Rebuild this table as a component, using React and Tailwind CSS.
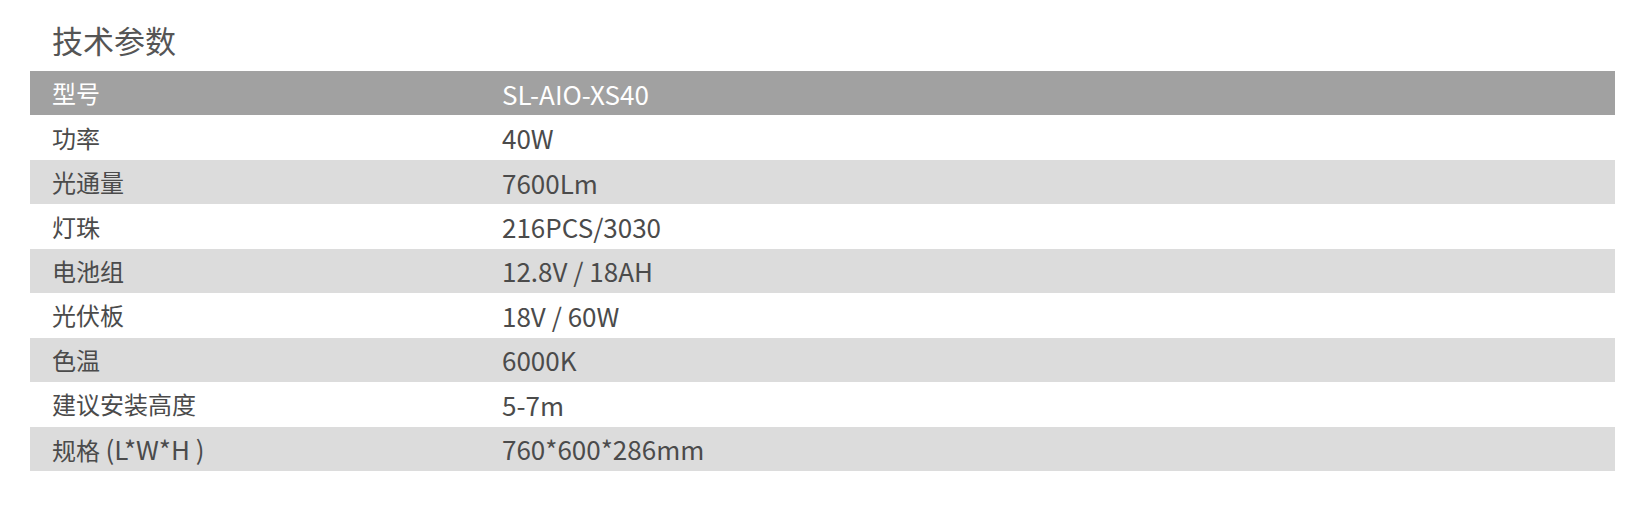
import React from 'react'

const ROWS = [
  ['型号', 'SL-AIO-XS40'],
  ['功率', '40W'],
  ['光通量', '7600Lm'],
  ['灯珠', '216PCS/3030'],
  ['电池组', '12.8V / 18AH'],
  ['光伏板', '18V / 60W'],
  ['色温', '6000K'],
  ['建议安装高度', '5-7m'],
  [<>规格 <span className="text-[26px]">(L*W*H )</span></>, '760*600*286mm'],
]

export default function App() {
  return (
    <div className="w-[1643px] h-[510px] bg-white pl-[30px] pt-[16px]" style={{ fontFamily: '"Noto Sans CJK SC", "Noto Sans", sans-serif' }}>
      <h2 className="pl-[22px] text-[31px] leading-[48px] text-[#555555] h-[55px]">技术参数</h2>
      <div className="w-[1585px]">
        {ROWS.map(([k, v], i) => (
          <div key={i}
            className={`flex items-center h-[44.45px] text-[24px] ${i === 0 ? 'bg-[#a1a1a1] text-white' : i % 2 ? 'bg-white text-[#4b4b4b]' : 'bg-[#dcdcdc] text-[#4b4b4b]'}`}>
            <div className="w-[472px] pl-[22px]">{k}</div>
            <div className="text-[26px]">{v}</div>
          </div>
        ))}
      </div>
    </div>
  )
}
